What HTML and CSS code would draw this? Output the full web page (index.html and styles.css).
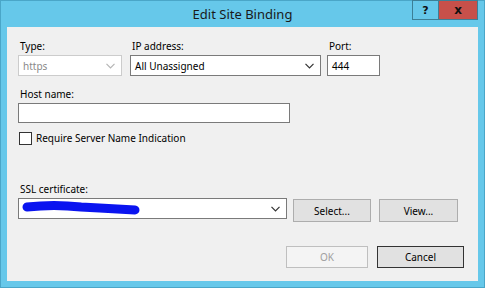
FILE: index.html
```html
<!DOCTYPE html>
<html>
  <head>
    <title>Edit Site Binding</title>
    <link rel="stylesheet" href="styles.css">
  </head>
  <body>
    <div class="window">
      <div class="titlebar">
        <span></span>
        <span class="title">Edit Site Binding</span>
        <div class="caption">
          <button class="cap help">?</button>
          <button class="cap close">x</button>
        </div>
      </div>

      <div class="content">
        <div class="row top-row">
          <div class="field">
            <label>Type:</label>
            <div class="select type disabled">
              <span>https</span>
              <svg class="chev" width="9" height="6" viewBox="0 0 9 6"><path d="M0.5 0.8 L4.5 4.8 L8.5 0.8" fill="none" stroke="#b5b5b5" stroke-width="1.2"/></svg>
            </div>
          </div>
          <div class="field">
            <label>IP address:</label>
            <div class="select ip">
              <span>All Unassigned</span>
              <svg class="chev" width="9" height="6" viewBox="0 0 9 6"><path d="M0.5 0.8 L4.5 4.8 L8.5 0.8" fill="none" stroke="#333" stroke-width="1.2"/></svg>
            </div>
          </div>
          <div class="field">
            <label>Port:</label>
            <div class="input port">444</div>
          </div>
        </div>

        <div class="field host">
          <label>Host name:</label>
          <div class="input hostname"></div>
        </div>

        <div class="check-row">
          <span class="checkbox"></span>
          <span>Require Server Name Indication</span>
        </div>

        <div class="field ssl">
          <label>SSL certificate:</label>
          <div class="row ssl-row">
            <div class="select cert">
              <!-- redacted certificate name -->
              <svg class="scribble" width="124" height="18" viewBox="0 0 124 18">
                <path d="M8 8 C25 6 45 6 62 8 C80 9 100 10 116 11" fill="none" stroke="#0a14f0" stroke-width="9" stroke-linecap="round"/>
                <path d="M100 9 L120 12 L104 14 Z" fill="#0a14f0"/>
              </svg>
              <svg class="chev" width="9" height="6" viewBox="0 0 9 6"><path d="M0.5 0.8 L4.5 4.8 L8.5 0.8" fill="none" stroke="#333" stroke-width="1.2"/></svg>
            </div>
            <button class="btn select-btn">Select...</button>
            <button class="btn view-btn">View...</button>
          </div>
        </div>

        <div class="footer">
          <button class="btn ok" disabled>OK</button>
          <button class="btn cancel">Cancel</button>
        </div>
      </div>
    </div>
  </body>
</html>
```

FILE: styles.css
```css
* {
  box-sizing: border-box;
}

body {
  margin: 0;
  font-family: "Noto Sans", "Open Sans", sans-serif;
  font-size: 10px;
  color: #000;
}

.window {
  width: 485px;
  height: 288px;
  background-color: #66c8ea;
  border: 1px solid #4aa6c8;
  display: flex;
  flex-direction: column;
}

.titlebar {
  height: 26px;
  display: grid;
  grid-template-columns: 1fr auto 1fr;
  align-items: start;
}

.title {
  font-size: 13px;
  color: #1a1a1a;
  padding-top: 4px;
}

.caption {
  justify-self: end;
  display: flex;
  margin-top: -1px;
  margin-right: 6px;
}

.cap {
  height: 20px;
  border: 1px solid #3c7f96;
  font-family: "DejaVu Sans", sans-serif;
  font-weight: bold;
  font-size: 11px;
  padding: 0;
  color: #111;
}

.help {
  width: 26px;
  background-color: #66c8ea;
  border-right: none;
}

.close {
  width: 40px;
  background-color: #c7504a;
  font-size: 12px;
}

.content {
  flex: 1;
  margin: 0 6px 6px 6px;
  background-color: #f0f0f0;
  padding: 11px 0 0 11px;
}

.row {
  display: flex;
}

.field label {
  display: block;
  padding-left: 2px;
  height: 17px;
  line-height: 17px;
}

.top-row .field {
  margin-right: 6px;
}

.select,
.input {
  height: 21px;
  background-color: #fff;
  border: 1px solid #7a7a7a;
  display: flex;
  align-items: center;
  padding: 0 4px;
  position: relative;
}

.chev {
  position: absolute;
  right: 6px;
  top: 7px;
}

.type {
  width: 104px;
  margin-right: 2px;
}

.disabled {
  border-color: #cccccc;
  color: #8a8a8a;
}

.ip {
  width: 191px;
}

.port {
  width: 53px;
}

.host {
  margin-top: 10px;
}

.hostname {
  width: 272px;
  height: 20px;
}

.check-row {
  display: flex;
  align-items: center;
  margin-top: 8px;
  padding-left: 1px;
}

.checkbox {
  width: 13px;
  height: 13px;
  border: 1px solid #333;
  background-color: #fff;
  margin-right: 4px;
}

.ssl {
  margin-top: 36px;
}

.cert {
  width: 269px;
  height: 21px;
}

.scribble {
  position: absolute;
  left: 0;
  top: 0;
}

.btn {
  font-family: "Noto Sans", "Open Sans", sans-serif;
  font-size: 10px;
  background-color: #e1e1e1;
  border: 1px solid #adadad;
  color: #000;
  padding: 0;
}

.select-btn {
  width: 78px;
  height: 23px;
  margin: 1px 0 0 6px;
}

.view-btn {
  width: 79px;
  height: 23px;
  margin: 1px 0 0 8px;
}

.footer {
  display: flex;
  margin-top: 24px;
  padding-left: 268px;
}

.ok {
  width: 82px;
  height: 22px;
  background-color: #f4f4f4;
  border-color: #bfbfbf;
  color: #a0a0a0;
}

.cancel {
  width: 87px;
  height: 22px;
  margin-left: 9px;
  border-color: #333;
  background-color: #e1e1e1;
}
```
